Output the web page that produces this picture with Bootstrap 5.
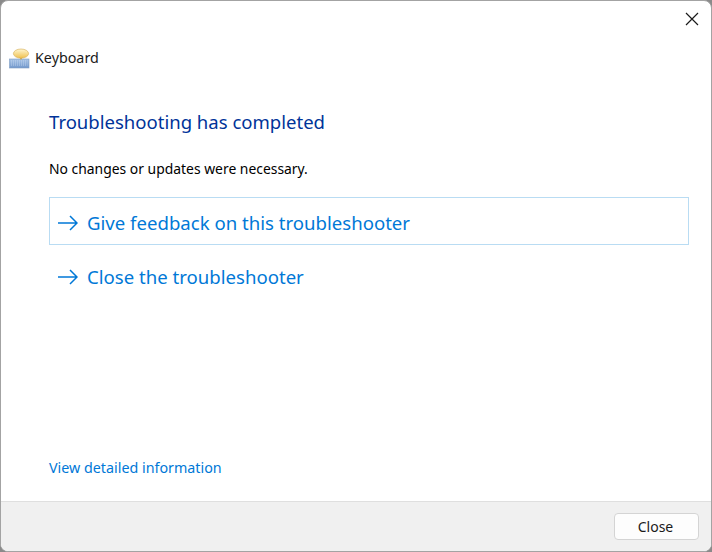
<!DOCTYPE html>
<html lang="en">
<head>
<meta charset="utf-8">
<title>Keyboard</title>
<link href="https://cdn.jsdelivr.net/npm/bootstrap@5.3.0/dist/css/bootstrap.min.css" rel="stylesheet">
<style>
html,body{height:100%;margin:0;background:#8a8a8a;overflow:hidden}
body{font-family:"Noto Sans","Open Sans",sans-serif}
.wiz-win{width:712px;height:552px;background:#fff;border:1px solid #a3a3a3;border-radius:8px;overflow:hidden}
.wiz-close{height:37px;padding:10px 11px 0 0}
.wiz-crumb{height:40px;padding-left:8px;font-size:14.3px;color:#1a1a1a;gap:5px}
.wiz-main{padding:0 22px 0 48px}
.wiz-title{font-size:18.55px;font-weight:400;color:#003399;margin:31px 0 0;line-height:26px}
.wiz-sub{font-size:13.9px;color:#000;margin:24px 0 0;line-height:20px}
.wiz-cmd{height:48px;font-size:18.6px;color:#0078d7;text-decoration:none;padding-left:8px;padding-top:4px;gap:9px;border:1px solid transparent}
.wiz-cmd-hot{border-color:#b9dcf3;margin-top:18px}
.wiz-cmd-next{margin-top:6px}
.wiz-detail{font-size:14.3px;color:#0078d7;text-decoration:none;margin-left:48px;margin-bottom:23px;line-height:20px}
.wiz-foot{height:50px;background:#f0f0f0;border-top:1px solid #dfdfdf;padding-right:12px}
.wiz-btn{width:85px;height:27px;padding:0 2px 0 0;font-size:14px;color:#1a1a1a;background:#fdfdfd;border:1px solid #d4d4d4;border-radius:4px}
</style>
</head>
<body>
<div class="wiz-win d-flex flex-column">
  <div class="wiz-close d-flex justify-content-end">
    <svg width="16" height="16" viewBox="0 0 16 16" fill="none" stroke="#1a1a1a" stroke-width="1.2"><path d="M2 2 14 14M14 2 2 14"/></svg>
  </div>
  <div class="wiz-crumb d-flex align-items-center">
    <svg width="21" height="21" viewBox="0 0 21 21">
      <defs>
        <linearGradient id="bub" x1="0" y1="0" x2="0" y2="1"><stop offset="0" stop-color="#fff6cf"/><stop offset="1" stop-color="#efc04e"/></linearGradient>
        <linearGradient id="keyb" x1="0" y1="0" x2="0" y2="1"><stop offset="0" stop-color="#a6c2e6"/><stop offset="1" stop-color="#7399cc"/></linearGradient>
      </defs>
      <rect x="0.5" y="11" width="19.5" height="9" fill="url(#keyb)" stroke="#7f9dc4" stroke-width=".6"/>
      <path d="M2 13h16.5M2 15h16.5M2 17h16.5" stroke="#cfdff3" stroke-width=".7" stroke-dasharray="1 1"/>
      <ellipse cx="12" cy="5.6" rx="7.6" ry="4.6" fill="url(#bub)" stroke="#d3ab52" stroke-width=".6"/>
      <rect x="11.2" y="10" width="1.6" height="1.4" fill="#c9a64f"/>
    </svg>
    <span>Keyboard</span>
  </div>
  <div class="wiz-main flex-grow-1">
    <h1 class="wiz-title">Troubleshooting has completed</h1>
    <p class="wiz-sub">No changes or updates were necessary.</p>
    <a href="#" class="wiz-cmd wiz-cmd-hot d-flex align-items-center">
      <svg width="20" height="16" viewBox="0 0 20 16" fill="none" stroke="#0078d7" stroke-width="1.5"><path d="M0 8H19M12 1l7 7-7 7"/></svg>
      <span>Give feedback on this troubleshooter</span>
    </a>
    <a href="#" class="wiz-cmd wiz-cmd-next d-flex align-items-center">
      <svg width="20" height="16" viewBox="0 0 20 16" fill="none" stroke="#0078d7" stroke-width="1.5"><path d="M0 8H19M12 1l7 7-7 7"/></svg>
      <span>Close the troubleshooter</span>
    </a>
  </div>
  <a href="#" class="wiz-detail">View detailed information</a>
  <div class="wiz-foot d-flex align-items-center justify-content-end">
    <button type="button" class="btn wiz-btn">Close</button>
  </div>
</div>
<script src="https://cdn.jsdelivr.net/npm/bootstrap@5.3.0/dist/js/bootstrap.bundle.min.js"></script>
</body>
</html>
